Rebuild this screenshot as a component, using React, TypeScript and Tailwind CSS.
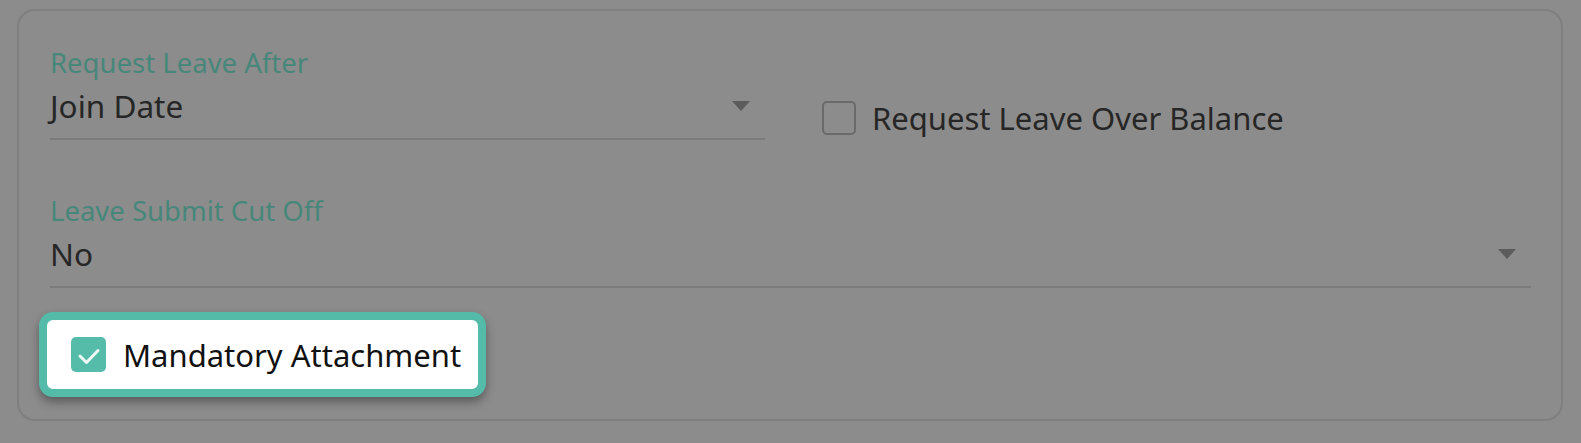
const font = { fontFamily: '"Noto Sans", "Open Sans", sans-serif' };

function Caret() {
  return (
    <svg width="18" height="10" viewBox="0 0 18 10" className="shrink-0">
      <path d="M0 0 H18 L9 10 Z" fill="#5c5c5c" />
    </svg>
  );
}

function SelectField({ label, value }: { label: string; value: string }) {
  return (
    <div className="flex flex-col">
      <span className="text-[27.5px] leading-[32px] text-[#47877a]">{label}</span>
      <div className="mt-[7px] flex items-center justify-between border-b-2 border-[#7b7b7b] pb-[12px] pr-[15px]">
        <span className="text-[31.5px] leading-[40px] text-[#262626]">{value}</span>
        <Caret />
      </div>
    </div>
  );
}

export default function App() {
  return (
    <div className="h-[443px] w-[1581px] bg-[#8c8c8c] pl-[17px] pt-[9px]" style={font}>
      <div className="flex h-[412px] w-[1546px] flex-col rounded-[18px] border-2 border-[#7f7f7f] pl-[31px] pr-[30px] pt-[36px]">
        <div className="flex items-start">
          <div className="w-[715px]">
            <SelectField label="Request Leave After" value="Join Date" />
          </div>
          <label className="ml-[57px] mt-[51px] flex items-center gap-[16px]">
            <span className="block h-[34px] w-[34px] rounded-[5px] border-2 border-[#6a6a6a]" />
            <span className="text-[31px] leading-[40px] text-[#262626]">Request Leave Over Balance</span>
          </label>
        </div>

        <div className="mt-[55px]">
          <SelectField label="Leave Submit Cut Off" value="No" />
        </div>

        <div className="-ml-[11px] mt-[24px] w-fit rounded-[14px] border-8 border-[#55bba9] bg-white shadow-[0_5px_10px_rgba(0,0,0,0.35)]">
          <div className="flex h-[69px] items-center gap-[17px] pl-[24px] pr-[17px]">
            <span className="flex h-[35px] w-[35px] items-center justify-center rounded-[5px] bg-[#56bcaa]">
              <svg width="35" height="35" viewBox="0 0 35 35">
                <polyline points="9,19 15.5,25.5 27,13.5" fill="none" stroke="#eef8f6" strokeWidth="3" strokeLinecap="round" strokeLinejoin="round" />
              </svg>
            </span>
            <span className="text-[31px] leading-[40px] text-[#111111]">Mandatory Attachment</span>
          </div>
        </div>
      </div>
    </div>
  );
}
